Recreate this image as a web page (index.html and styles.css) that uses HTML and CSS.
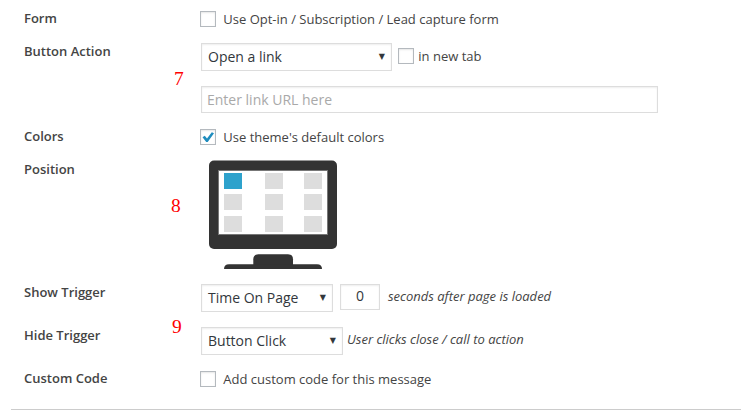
FILE: index.html
```
<!DOCTYPE html>
<html lang="en">
<head>
    <meta charset="UTF-8">
    <meta name="viewport" content="width=device-width, initial-scale=1.0">
    <title>Message Settings</title>
    <link rel="stylesheet" href="styles.css">
</head>
<body>
    <form class="settings">
        <div class="row">
            <div class="label">Form</div>
            <label class="check-line"><input type="checkbox" class="checkbox">Use Opt-in / Subscription / Lead capture form</label>
        </div>

        <div class="row row-action">
            <div class="label">Button Action</div>
            <div class="field">
                <div class="controls">
                    <div class="select select-action">Open a link<span class="arrow">▼</span></div>
                    <label class="check-line tab-check"><input type="checkbox" class="checkbox">in new tab</label>
                </div>
                <input type="text" class="text-input" placeholder="Enter link URL here">
            </div>
            <span class="marker marker-action">7</span>
        </div>

        <div class="row">
            <div class="label">Colors</div>
            <label class="check-line"><input type="checkbox" class="checkbox" checked>Use theme's default colors</label>
        </div>

        <div class="row row-position">
            <div class="label">Position</div>
            <!-- monitor with the nine message positions -->
            <svg class="monitor" width="128" height="109" viewBox="0 0 128 109">
                <rect x="0" y="0.5" width="128" height="88.500" rx="5" fill="#333"/>
                <rect x="9.500" y="10.500" width="109" height="64" fill="#fff" stroke="#777"/>
                <g fill="#ddd">
                    <rect x="15" y="13" width="18" height="16" fill="#2ea2cc"/>
                    <rect x="56" y="13" width="18" height="16"/>
                    <rect x="95" y="13" width="18" height="16"/>
                    <rect x="15" y="34" width="18" height="16"/>
                    <rect x="56" y="34" width="18" height="16"/>
                    <rect x="95" y="34" width="18" height="16"/>
                    <rect x="15" y="56" width="18" height="16"/>
                    <rect x="56" y="56" width="18" height="16"/>
                    <rect x="95" y="56" width="18" height="16"/>
                </g>
                <path d="M44.300 105V99.300q0-5 5-5H79q5 0 5 5V105z" fill="#333"/>
                <path d="M15 109q0-4.800 5-4.800H108q5 0 5 4.800z" fill="#333"/>
            </svg>
            <span class="marker marker-position">8</span>
        </div>

        <div class="row row-trigger">
            <div class="label">Show Trigger</div>
            <div class="controls">
                <div class="select select-show">Time On Page<span class="arrow">▼</span></div>
                <input type="text" class="number" value="0">
                <em class="hint">seconds after page is loaded</em>
            </div>
        </div>

        <div class="row row-trigger">
            <div class="label">Hide Trigger</div>
            <div class="controls">
                <div class="select select-hide">Button Click<span class="arrow">▼</span></div>
                <em class="hint hint-close">User clicks close / call to action</em>
            </div>
            <span class="marker marker-trigger">9</span>
        </div>

        <div class="row row-code">
            <div class="label">Custom Code</div>
            <label class="check-line"><input type="checkbox" class="checkbox">Add custom code for this message</label>
        </div>
    </form>
</body>
</html>
```
FILE: styles.css
```
* {
    margin: 0;
    padding: 0;
    box-sizing: border-box;
}

body {
    background: #fff;
    color: #444;
    font-family: "Open Sans", sans-serif;
    font-size: 13px;
    line-height: 17px;
    overflow: hidden;
}

.settings {
    margin-left: 11px;
    padding: 10px 0 0 13px;
    border-bottom: 1px solid #ccc;
}

.row {
    position: relative;
    display: grid;
    grid-template-columns: 177px 1fr;
    align-items: start;
    height: 33px;
}

.row-action {
    height: 85px;
}

.row-position {
    height: 123px;
}

.row-trigger {
    height: 43px;
}

.row-code {
    height: 39px;
}

.label {
    font-weight: 600;
}

.check-line {
    display: flex;
    align-items: center;
    gap: 7.3px;
    height: 18px;
    margin-left: -1px;
    white-space: nowrap;
}

.checkbox {
    appearance: none;
    width: 16px;
    height: 16px;
    border: 1px solid #b4b9be;
    background: #fff;
    box-shadow: inset 0 1px 2px rgba(0, 0, 0, 0.1);
}

.checkbox:checked {
    background: #fff url("data:image/svg+xml,%3Csvg xmlns='http://www.w3.org/2000/svg' viewBox='0 0 14 14'%3E%3Cpath d='M1.500 7.300L3.800 5.800L6 8.500L10.800 2.200L13 3.200L6.700 11.900H5.200z' fill='%231e8cbe'/%3E%3C/svg%3E") no-repeat;
}

.tab-check {
    gap: 4.3px;
    height: 16px;
    margin: -2px 0 0 6px;
}

.controls {
    display: flex;
    align-items: flex-start;
}

.row-action .controls {
    align-items: center;
    height: 28px;
    margin-bottom: 15px;
}

.select {
    display: flex;
    justify-content: space-between;
    align-items: center;
    height: 28px;
    padding: 0 6px 2px 6px;
    border: 1px solid #ddd;
    box-shadow: inset 0 1px 2px rgba(0, 0, 0, 0.07);
    color: #32373c;
    font-size: 14px;
}

.select-action {
    width: 191px;
}

.select-show {
    width: 132px;
}

.select-hide {
    width: 142px;
}

.arrow {
    font-family: "DejaVu Sans", sans-serif;
    font-size: 8px;
}

.text-input,
.number {
    display: block;
    border: 1px solid #ddd;
    box-shadow: inset 0 1px 2px rgba(0, 0, 0, 0.07);
    color: #32373c;
    font-family: inherit;
    font-size: 14px;
}

.text-input {
    width: 457px;
    height: 27px;
    padding: 0 5px;
}

.text-input::placeholder {
    color: #a9a9a9;
}

.number {
    width: 40px;
    height: 26px;
    padding-bottom: 3px;
    margin-left: 7px;
    text-align: center;
}

.hint {
    margin: 4px 0 0 8px;
}

.hint-close {
    margin-left: 4px;
}

.monitor {
    display: block;
    margin-left: 8px;
    margin-top: -1px;
}

.marker {
    position: absolute;
    color: #f00;
    font-family: "Liberation Serif", serif;
    font-size: 19.5px;
    line-height: 22px;
}

.marker-action {
    left: 150px;
    top: 25px;
}

.marker-position {
    left: 147px;
    top: 34px;
}

.marker-trigger {
    left: 148px;
    top: -11px;
}
```
